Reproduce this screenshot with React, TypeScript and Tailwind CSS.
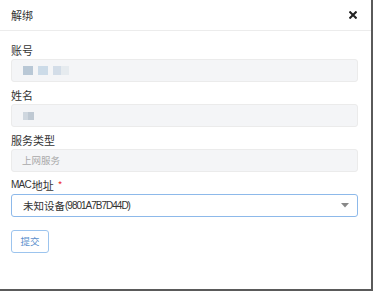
import React from "react";

const font = { fontFamily: '"Noto Sans CJK SC", "Liberation Sans", sans-serif' };
const latin = { fontFamily: '"Liberation Sans", "Noto Sans CJK SC", sans-serif' };

function Field({ label, children, required }: { label: React.ReactNode; children: React.ReactNode; required?: boolean }) {
  return (
    <div className="flex flex-col">
      <div className="h-[18px] text-[11px] leading-[18px] text-[#333] flex items-center">
        {label}
        {required && <span className="text-[#e33] ml-[4px] text-[10px]">*</span>}
      </div>
      {children}
    </div>
  );
}

export default function App() {
  return (
    <div className="w-[373px] h-[291px] bg-[#5a5a5a]" style={font}>
      <div className="w-[371px] h-[289px] bg-white flex flex-col">
        <div className="h-[31px] flex items-center justify-between pl-[11px] pr-[14px] border-b border-[#ececec]">
          <span className="text-[11px] text-[#333]">解绑</span>
          <svg width="8" height="8" viewBox="0 0 10 10">
            <path d="M1.5 1.5 L8.5 8.5 M8.5 1.5 L1.5 8.5" stroke="#222" strokeWidth="2.6" strokeLinecap="square" />
          </svg>
        </div>
        <div className="flex flex-col gap-[4px] pl-[11px] pr-[13px] pt-[10px]">
          <Field label="账号">
            <div className="h-[23px] rounded-[3px] border border-[#ebebeb] bg-[#f4f5f7] flex items-center pl-[11px]">
              <div className="w-[10px] h-[9px] bg-[#b9c8d6]" />
              <div className="w-[10px] h-[9px] bg-[#ccdbe8] ml-[5px]" />
              <div className="w-[8px] h-[9px] bg-[#d3dde8] ml-[5px]" />
              <div className="w-[8px] h-[9px] bg-[#e6ebef]" />
            </div>
          </Field>
          <Field label="姓名">
            <div className="h-[23px] rounded-[3px] border border-[#ebebeb] bg-[#f4f5f7] flex items-center pl-[11px]">
              <div className="w-[5px] h-[8px] bg-[#cfd7df]" />
              <div className="w-[6px] h-[8px] bg-[#bfc9d3]" />
            </div>
          </Field>
          <Field label="服务类型">
            <div className="h-[23px] rounded-[3px] border border-[#ebebeb] bg-[#f4f5f7] flex items-center pl-[10px] text-[9.5px] text-[#a9a9a9]">
              上网服务
            </div>
          </Field>
          <Field
            label={
              <>
                <span className="text-[10px] tracking-[-0.8px]" style={latin}>MAC</span>
                <span className="ml-[1px]">地址</span>
              </>
            }
            required
          >
            <div className="h-[23px] rounded-[3px] border border-[#8db9ea] bg-white flex items-center justify-between pl-[11px] pr-[8px] text-[10.5px] text-[#333]">
              <span className="flex items-center">
                <span>未知设备</span>
                <span className="text-[10px] tracking-[-1px]" style={latin}>(9801A7B7D44D)</span>
              </span>
              <svg width="8" height="5" viewBox="0 0 8 5">
                <path d="M0 0 L8 0 L4 4.5 Z" fill="#888" />
              </svg>
            </div>
          </Field>
        </div>
        <div className="pl-[11px] mt-[13px]">
          <button className="w-[38px] h-[23px] rounded-[3px] border border-[#9cc4ee] bg-white text-[9.5px] text-[#5b8fcc] flex items-center justify-center">
            提交
          </button>
        </div>
      </div>
    </div>
  );
}
